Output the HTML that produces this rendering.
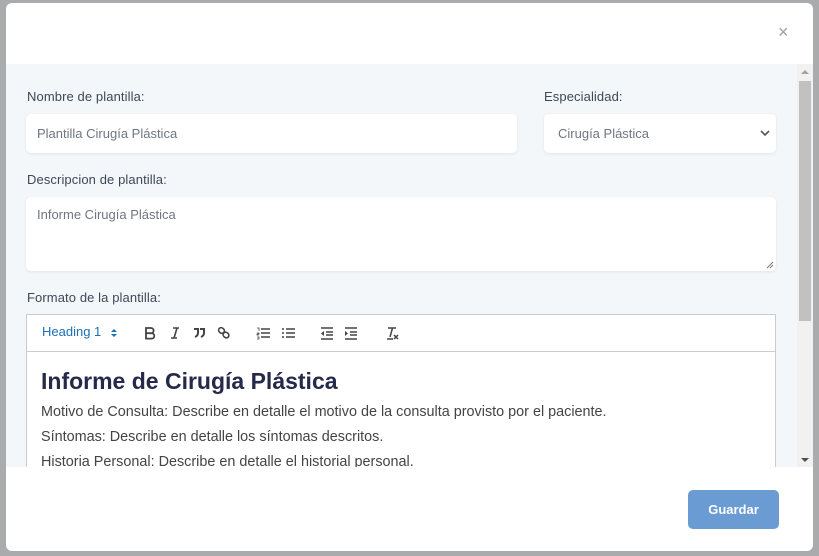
<!DOCTYPE html>
<html><head><meta charset="utf-8">
<style>
*{box-sizing:border-box;margin:0;padding:0}
body{width:819px;height:556px;background:#a9abad;position:relative;overflow:hidden;font-family:"Liberation Sans",sans-serif}
.modal{position:absolute;left:6px;top:3px;width:807px;height:548px;background:#fff;border-radius:6px;overflow:hidden}
.close{position:absolute;left:772px;top:19px;font-size:18px;color:#9aa0a6}
.bodyarea{position:absolute;left:0;top:61px;width:807px;height:403px;background:#f4f7fa;overflow:hidden}
.lbl{position:absolute;font-size:13px;color:#3d4756;letter-spacing:0.1px}
.inp{position:absolute;background:#fff;border-radius:5px;box-shadow:0 1px 3px rgba(0,0,0,0.08);font-size:13px;color:#6e7680;padding-left:11px}
.sb{position:absolute;left:791px;top:0;width:16px;height:403px;background:#f1f1f1}
.thumb{position:absolute;left:2px;top:17px;width:12px;height:240px;background:#c1c1c1}
.editor{position:absolute;left:20px;top:250px;width:750px;height:160px;background:#fff;border:1px solid #ccc}
.tb{height:37px;border-bottom:1px solid #ccc;position:relative}
.tb svg{position:absolute;top:10px}
.content{padding:15px 14px;color:#444;font-size:14.4px}
.content h1{font-size:23px;color:#262a4a;font-weight:bold;margin-bottom:9px;margin-top:1px}
.content p{margin-bottom:8px;line-height:17px}
.btn{position:absolute;left:682px;top:487px;width:91px;height:39px;background:#6a9bd3;border-radius:5px;color:#fff;font-weight:bold;font-size:13px;text-align:center;line-height:39px}
</style></head><body>
<div class="modal">
<div class="close">×</div>
<div class="bodyarea">
 <div class="lbl" style="left:21px;top:25px">Nombre de plantilla:</div>
 <div class="inp" style="left:20px;top:50px;width:491px;height:39px;line-height:39px">Plantilla Cirugía Plástica</div>
 <div class="lbl" style="left:538px;top:25px">Especialidad:</div>
 <div class="inp" style="left:538px;top:50px;width:232px;height:39px;line-height:39px;padding-left:14px">Cirugía Plástica
  <svg style="position:absolute;right:6px;top:15px" width="10" height="8" viewBox="0 0 10 8"><path d="M1 2l4 4 4-4" stroke="#555" stroke-width="1.6" fill="none"/></svg></div>
 <div class="lbl" style="left:21px;top:108px">Descripcion de plantilla:</div>
 <div class="inp" style="left:20px;top:133px;width:750px;height:74px;padding-top:10px">Informe Cirugía Plástica
  <svg style="position:absolute;right:2px;bottom:2px" width="8" height="8" viewBox="0 0 8 8"><path d="M7 1L1 7M7 4L4 7" stroke="#777" stroke-width="1"/></svg></div>
 <div class="lbl" style="left:21px;top:226px">Formato de la plantilla:</div>
 <div class="editor">
  <div class="tb">
   <span style="position:absolute;left:15px;top:9px;font-size:13px;color:#1a6fb5">Heading 1</span>
   <svg style="left:83px;top:12px" width="8" height="12" viewBox="0 0 8 12"><path d="M1 5l3-3 3 3zM1 7l3 3 3-3z" fill="#1a6fb5"/></svg>
   <svg style="left:116px" width="14" height="16" viewBox="0 0 14 16"><path d="M3 3h5a2.6 2.6 0 010 5.2H3zM3 8.2h5.6a2.7 2.7 0 010 5.4H3z" stroke="#444" stroke-width="1.8" fill="none"/></svg>
   <svg style="left:141px" width="14" height="16" viewBox="0 0 14 16"><path d="M5 3h6M3 13h6M9 3L6 13" stroke="#444" stroke-width="1.6" fill="none"/></svg>
   <svg style="left:165px" width="14" height="16" viewBox="0 0 14 16"><path d="M2 4h4v4c0 2-1 3-3 4M8 4h4v4c0 2-1 3-3 4" stroke="#444" stroke-width="2" fill="none"/></svg>
   <svg style="left:190px" width="14" height="16" viewBox="0 0 14 16"><rect x="1.5" y="3" width="6" height="5" rx="2.5" transform="rotate(40 4.5 5.5)" stroke="#444" stroke-width="1.6" fill="none"/><rect x="6" y="7.5" width="6" height="5" rx="2.5" transform="rotate(40 9 10)" stroke="#444" stroke-width="1.6" fill="none"/></svg>
   <svg style="left:229px" width="15" height="16" viewBox="0 0 15 16"><path d="M5 4h9M5 8h9M5 12h9" stroke="#444" stroke-width="1.6"/><path d="M1 3h2v3M1 8h2v1H1v1h2M1 12h2v2H1" stroke="#444" stroke-width="0.8" fill="none"/></svg>
   <svg style="left:254px" width="15" height="16" viewBox="0 0 15 16"><path d="M5 4h9M5 8h9M5 12h9" stroke="#444" stroke-width="1.6"/><path d="M1 4h2M1 8h2M1 12h2" stroke="#444" stroke-width="1.6"/></svg>
   <svg style="left:293px" width="14" height="16" viewBox="0 0 14 16"><path d="M1 3h12M6 7h7M6 10h7M1 14h12" stroke="#444" stroke-width="1.6"/><path d="M4 6L1 8.5 4 11z" fill="#444"/></svg>
   <svg style="left:317px" width="14" height="16" viewBox="0 0 14 16"><path d="M1 3h12M6 7h7M6 10h7M1 14h12" stroke="#444" stroke-width="1.6"/><path d="M1 6l3 2.5L1 11z" fill="#444"/></svg>
   <svg style="left:358px" width="14" height="16" viewBox="0 0 14 16"><path d="M3 3h8M7.5 3L5 12M2 14h6" stroke="#444" stroke-width="1.5" fill="none"/><path d="M9 10l4 4M13 10l-4 4" stroke="#444" stroke-width="1.5"/></svg>
  </div>
  <div class="content">
   <h1>Informe de Cirugía Plástica</h1>
   <p>Motivo de Consulta: Describe en detalle el motivo de la consulta provisto por el paciente.</p>
   <p>Síntomas: Describe en detalle los síntomas descritos.</p>
   <p>Historia Personal: Describe en detalle el historial personal.</p>
  </div>
 </div>
 <div class="sb"><div class="thumb"></div>
  <svg style="position:absolute;left:4px;top:5px" width="8" height="6" viewBox="0 0 8 6"><path d="M0 5l4-4 4 4z" fill="#a3a3a3"/></svg>
  <svg style="position:absolute;left:4px;top:393px" width="8" height="6" viewBox="0 0 8 6"><path d="M0 1l4 4 4-4z" fill="#505050"/></svg>
 </div>
</div>
<div class="btn">Guardar</div>
</div>
</body></html>
